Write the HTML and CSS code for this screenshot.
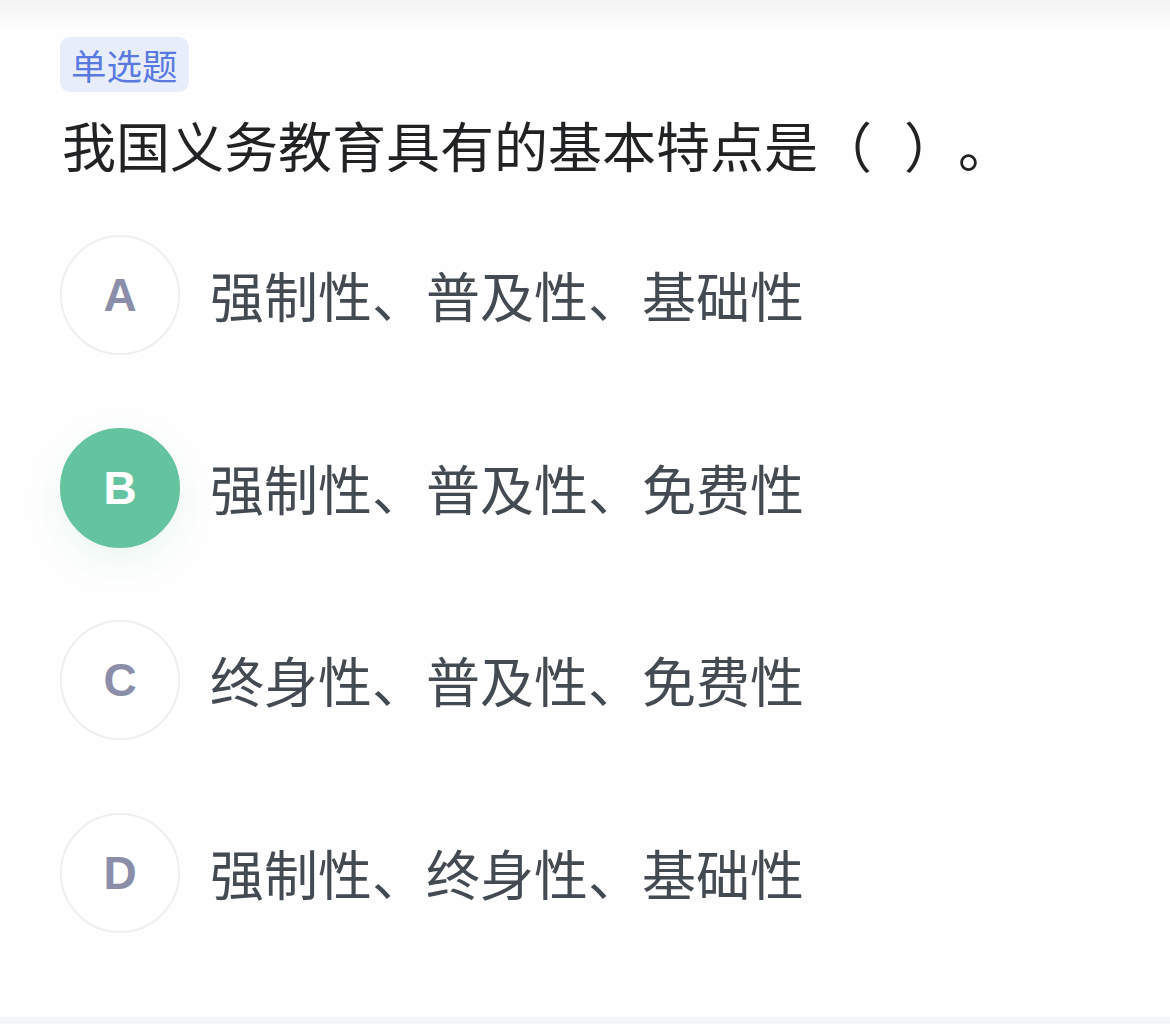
FILE: index.html
```html
<!DOCTYPE html>
<html lang="zh-CN">
<head>
<meta charset="utf-8">
<link rel="stylesheet" href="styles.css">
</head>
<body>
<div class="page">
  <div class="top-shade"></div>
  <div class="content">
    <span class="tag">单选题</span>
    <h1 class="question">我国义务教育具有的基本特点是（<span class="blank"></span>）。</h1>
    <ul class="options">
      <li class="option"><span class="letter">A</span><span class="text">强制性、普及性、基础性</span></li>
      <li class="option selected"><span class="letter">B</span><span class="text">强制性、普及性、免费性</span></li>
      <li class="option"><span class="letter">C</span><span class="text">终身性、普及性、免费性</span></li>
      <li class="option"><span class="letter">D</span><span class="text">强制性、终身性、基础性</span></li>
    </ul>
  </div>
  <div class="bottom-strip"></div>
</div>
</body>
</html>
```
FILE: styles.css
```css
html, body {
  margin: 0;
  padding: 0;
  background: #ffffff;
}
body {
  font-family: "Noto Sans CJK SC", "Noto Sans", sans-serif;
  text-spacing-trim: space-all;
}
.page {
  position: relative;
  width: 1170px;
  height: 1024px;
  overflow: hidden;
  background: #fefefe;
  display: flex;
  flex-direction: column;
}
.top-shade {
  position: absolute;
  left: 0;
  top: 0;
  right: 0;
  height: 34px;
  background: linear-gradient(to bottom, #f4f4f5 0%, #fafafa 50%, rgba(254,254,254,0) 100%);
}
.content {
  flex: 1;
  padding: 37px 0 0 60px;
  position: relative;
}
.tag {
  display: inline-block;
  height: 55px;
  line-height: 55px;
  padding: 0 11px;
  border-radius: 10px;
  background: #e8edfb;
  color: #5a79e0;
  font-size: 35.5px;
}
.question {
  margin: 17px 0 0 2px;
  font-size: 54px;
  font-weight: 400;
  line-height: 72px;
  color: #202224;
  text-spacing-trim: space-all;
}
.blank {
  display: inline-block;
  width: 32px;
}
.options {
  list-style: none;
  margin: 0;
  padding: 0;
  margin-top: 54px;
  display: flex;
  flex-direction: column;
  gap: 72.5px;
}
.option {
  display: flex;
  align-items: center;
  gap: 30px;
  height: 120px;
}
.letter {
  flex: none;
  width: 116px;
  height: 116px;
  border: 2px solid #efeff1;
  border-radius: 50%;
  display: flex;
  align-items: center;
  justify-content: center;
  font-family: "Liberation Sans", Arial, sans-serif;
  font-size: 46px;
  font-weight: 700;
  color: #8a8ea8;
  background: #ffffff;
}
.option.selected .letter {
  background: #63c49f;
  border-color: #63c49f;
  color: #ffffff;
  box-shadow: 0 14px 36px rgba(99, 196, 159, 0.12);
}
.text {
  font-size: 54px;
  color: #434a52;
  line-height: 72px;
}
.bottom-strip {
  height: 7px;
  background: #f5f6fa;
}
```
